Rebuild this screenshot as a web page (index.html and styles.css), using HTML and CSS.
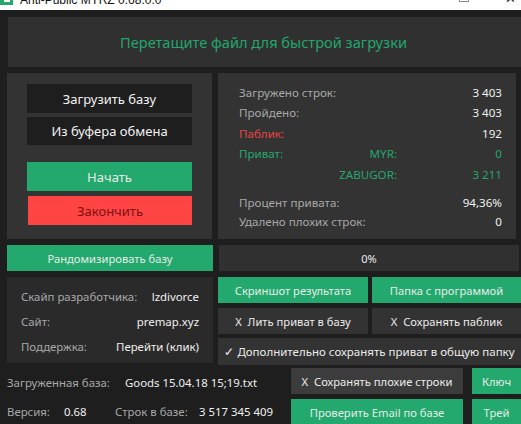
FILE: index.html
```html
<!DOCTYPE html>
<html lang="ru">
<head>
<meta charset="utf-8">
<title>Anti-Public MYRZ</title>
<link rel="stylesheet" href="styles.css">
</head>
<body>
<div class="titlebar">
  <div class="tb-inner">
    <span class="tb-icon"><span class="tb-icon-l"></span></span>
    <span class="tb-title">Anti-Public MYRZ 0.68.0.0</span>
    <span class="tb-spacer"></span>
    <span class="tb-max"></span>
    <span class="tb-close">✕</span>
  </div>
</div>
<div class="app">
  <div class="drop">Перетащите файл для быстрой загрузки</div>

  <div class="row row-main">
    <div class="ctrl-panel">
      <div class="btn dark b1">Загрузить базу</div>
      <div class="btn dark b2">Из буфера обмена</div>
      <div class="btn green b3">Начать</div>
      <div class="btn red b4">Закончить</div>
    </div>
    <div class="stats">
      <div class="srow"><span class="lbl">Загружено строк:</span><span class="val">3 403</span></div>
      <div class="srow"><span class="lbl">Пройдено:</span><span class="val">3 403</span></div>
      <div class="srow"><span class="lbl red-t">Паблик:</span><span class="val">192</span></div>
      <div class="srow"><span class="lbl green-t">Приват:<span class="sub">MYR:</span></span><span class="val green-t">0</span></div>
      <div class="srow"><span class="lbl green-t"><span class="sub">ZABUGOR:</span></span><span class="val green-t">3 211</span></div>
      <div class="srow gap"><span class="lbl">Процент привата:</span><span class="val">94,36%</span></div>
      <div class="srow last"><span class="lbl">Удалено плохих строк:</span><span class="val">0</span></div>
    </div>
  </div>

  <div class="row row-mid">
    <div class="btn green rand">Рандомизировать базу</div>
    <div class="progress">0%</div>
  </div>

  <div class="row row-info">
    <div class="info">
      <div class="irow"><span class="lbl">Скайп разработчика:</span><span class="val">lzdivorce</span></div>
      <div class="irow"><span class="lbl">Сайт:</span><span class="val">premap.xyz</span></div>
      <div class="irow"><span class="lbl">Поддержка:</span><span class="val">Перейти (клик)</span></div>
    </div>
    <div class="actions">
      <div class="btn green act">Скриншот результата</div>
      <div class="btn green act">Папка с программой</div>
      <div class="btn grey act">X&nbsp;&nbsp;Лить приват в базу</div>
      <div class="btn grey act">X&nbsp;&nbsp;Сохранять паблик</div>
      <div class="btn grey act wide">✓ Дополнительно сохранять приват в общую папку</div>
    </div>
  </div>

  <div class="row row-bottom">
    <div class="binfo">
      <div class="bline l1"><span class="lbl w-base">Загруженная база:</span><span class="val">Goods 15.04.18 15;19.txt</span></div>
      <div class="bline l2"><span class="lbl w-ver">Версия:</span><span class="val w-vernum">0.68</span><span class="lbl w-rows">Строк в базе:</span><span class="val">3 517 345 409</span></div>
    </div>
    <div class="bbtns">
      <div class="btn grey2 bb">X&nbsp;&nbsp;Сохранять плохие строки</div>
      <div class="btn green bs">Ключ</div>
      <div class="btn green bb">Проверить Email по базе</div>
      <div class="btn green bs">Трей</div>
    </div>
  </div>
</div>
</body>
</html>
```

FILE: styles.css
```css
* { box-sizing: border-box; }
html, body {
  margin: 0;
  padding: 0;
  width: 521px;
  height: 424px;
  overflow: hidden;
  background: #1e1e1e;
  font-family: "Noto Sans", "Open Sans", sans-serif;
  font-size: 11.4px;
  color: #eaeaea;
}

.titlebar {
  height: 10px;
  background: #ffffff;
  overflow: hidden;
}
.tb-inner {
  display: flex;
  align-items: center;
  height: 16px;
  margin-top: -8px;
}
.tb-icon {
  align-self: flex-start;
  width: 13px;
  height: 13px;
  background: #23a86e;
  position: relative;
}
.tb-icon-l {
  position: absolute;
  left: 4px;
  top: 1px;
  width: 6px;
  height: 9px;
  border-left: 2px solid #fff;
  border-bottom: 2px solid #fff;
}
.tb-title {
  margin-left: 7px;
  font-family: "Liberation Sans", sans-serif;
  font-size: 12px;
  line-height: 16px;
  color: #111;
}
.tb-spacer { flex: 1; }
.tb-max {
  align-self: flex-start;
  width: 10px;
  height: 10px;
  border: 1px solid #8a8a8a;
  margin-right: 36px;
}
.tb-close {
  align-self: flex-start;
  font-size: 13px;
  line-height: 12px;
  color: #222;
  margin-right: 5px;
}

.app {
  padding: 7px 0 0 7px;
}

.drop {
  margin-left: 1px;
  height: 50px;
  background: #303030;
  color: #22a66c;
  font-size: 14.6px;
  display: flex;
  align-items: center;
  justify-content: center;
  padding-right: 2px;
}

.row { display: flex; }

.row-main { margin-top: 6px; height: 166px; }

.ctrl-panel {
  width: 205px;
  background: #333333;
  padding: 11px 20px 0 20px;
  display: flex;
  flex-direction: column;
}
.btn {
  display: flex;
  align-items: center;
  justify-content: center;
  white-space: nowrap;
  font-size: 11.2px;
}
.dark { background: #1e1e1e; color: #f2f2f2; }
.green { background: #23a86e; color: #e6ece6; }
.red { background: #ff4444; color: #7a1212; }
.grey { background: #333333; color: #ececec; }
.grey2 { background: #3c3c3c; color: #ececec; }

.b1 { height: 29px; font-size: 13px; }
.b2 { height: 28px; margin-top: 4px; font-size: 13px; }
.b3 { height: 29px; margin-top: 17px; font-size: 13px; }
.b4 { height: 29px; margin-top: 5px; margin-left: 1px; font-size: 13px; }

.stats {
  margin-left: 6px;
  width: 298px;
  background: #333333;
  padding: 9px 14px 0 21px;
  font-size: 11.6px;
}
.srow {
  display: flex;
  height: 20.5px;
  align-items: center;
}
.srow.gap { margin-top: 7.5px; height: 20px; }
.srow.last { height: 19px; }
.lbl { color: #a8a8a8; }
.val { color: #f0f0f0; }
.srow .lbl {
  flex: 1;
  display: flex;
}
.srow .val {
  width: 105px;
  text-align: right;
}
.sub {
  margin-left: auto;
}
.red-t { color: #e84545 !important; }
.green-t { color: #23a86e !important; }

.row-mid { margin-top: 6px; height: 26px; }
.rand { width: 206px; }
.progress {
  flex: 1;
  margin-left: 6px;
  margin-right: 2px;
  background: #303030;
  color: #e8e8e8;
  display: flex;
  align-items: center;
  justify-content: center;
  font-size: 11px;
}

.row-info { margin-top: 6px; height: 87px; }
.info {
  width: 206px;
  height: 86px;
  background: #2a2a2a;
  padding: 7px 14px 0 14px;
}
.irow {
  display: flex;
  justify-content: space-between;
  align-items: center;
  height: 25px;
}
.actions {
  margin-left: 5px;
  flex: 1;
  display: grid;
  grid-template-columns: 150px 1fr;
  grid-auto-rows: 26px;
  column-gap: 4px;
  row-gap: 5px;
  align-content: start;
}
.actions .wide { grid-column: 1 / 3; margin-top: -1px; font-size: 11.5px; }

.row-bottom { margin-top: 4px; }
.binfo {
  width: 284px;
}
.bline {
  display: flex;
  align-items: center;
}
.l1 { height: 28px; }
.l2 { height: 31px; }
.w-base { width: 118px; }
.w-ver { width: 57px; }
.w-vernum { width: 51px; }
.w-rows { width: 84px; }
.bbtns {
  flex: 1;
  display: grid;
  grid-template-columns: 172px 1fr;
  grid-auto-rows: 26px;
  column-gap: 9px;
  row-gap: 5px;
}
```
